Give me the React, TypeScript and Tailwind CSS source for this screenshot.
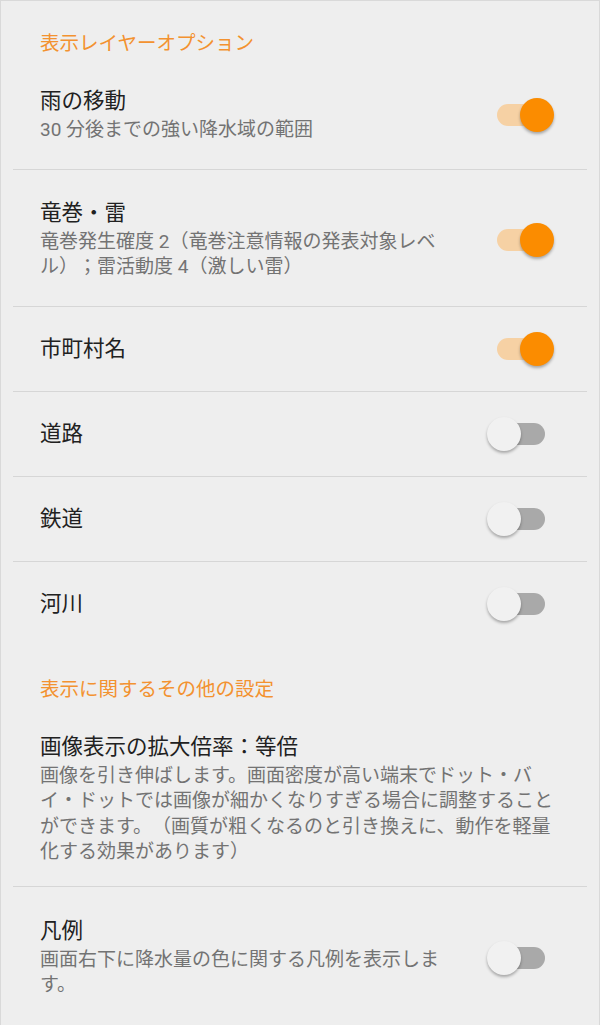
import { useState } from "react";

type Item = {
  title: string;
  summary?: string;
  on?: boolean;
};

const layers: Item[] = [
  { title: "雨の移動", summary: "30 分後までの強い降水域の範囲", on: true },
  {
    title: "竜巻・雷",
    summary: "竜巻発生確度 2（竜巻注意情報の発表対象レベル）；雷活動度 4（激しい雷）",
    on: true,
  },
  { title: "市町村名", on: true },
  { title: "道路", on: false },
  { title: "鉄道", on: false },
  { title: "河川", on: false },
];

function Switch({ checked, onChange }: { checked: boolean; onChange: () => void }) {
  return (
    <button
      onClick={onChange}
      role="switch"
      aria-checked={checked}
      className="relative w-[67px] h-[34px] shrink-0"
    >
      <span
        className={
          "absolute left-[10px] top-[6px] w-[48px] h-[22px] rounded-full " +
          (checked ? "bg-[#f6d1a4]" : "bg-[#a9a9a9]")
        }
      />
      <span
        className={
          "absolute top-0 w-[34px] h-[34px] rounded-full shadow-[0_2px_3px_rgba(0,0,0,0.3)] " +
          (checked ? "left-[33px] bg-[#fb8c00]" : "left-0 bg-[#f1f1f1]")
        }
      />
    </button>
  );
}

function Header({ children }: { children: string }) {
  return (
    <div className="pt-[29px] pl-[27px] text-[19.5px] leading-[28px] text-[#f39230]">{children}</div>
  );
}

export default function App() {
  const [state, setState] = useState<boolean[]>(layers.map((l) => !!l.on));
  const [legend, setLegend] = useState(false);

  function flip(i: number) {
    setState((s) => s.map((v, j) => (j === i ? !v : v)));
  }

  return (
    <div
      className="w-[600px] h-[1025px] overflow-hidden bg-[#eeeeee] border-x border-t border-[#d9d9d9] px-[12px] [text-spacing-trim:space-all]"
      style={{ fontFamily: 'Roboto, "Noto Sans CJK JP", sans-serif' }}
    >
      <Header>表示レイヤーオプション</Header>

      {layers.map((item, i) =>
        item.summary ? (
          <div
            key={item.title}
            className="flex items-center justify-between pl-[27px] pr-[33px] pt-[30px] pb-[26px] border-b border-[#d6d6d6]"
          >
            <div className="w-[405px]">
              <div className="text-[21.5px] leading-[26px] text-[#212121]">{item.title}</div>
              <div className="mt-[3px] text-[19px] leading-[25.5px] text-[#737373]">{item.summary}</div>
            </div>
            <Switch checked={state[i]} onChange={() => flip(i)} />
          </div>
        ) : (
          <div
            key={item.title}
            className={
              "flex items-center justify-between pl-[27px] pr-[33px] h-[85px] " +
              (i === layers.length - 1 ? "" : "border-b border-[#d6d6d6]")
            }
          >
            <div className="text-[21.5px] leading-[26px] text-[#212121]">{item.title}</div>
            <Switch checked={state[i]} onChange={() => flip(i)} />
          </div>
        )
      )}

      <Header>表示に関するその他の設定</Header>

      <div className="pl-[27px] pt-[30px] pb-[21px] border-b border-[#d6d6d6]">
        <div className="text-[21.5px] leading-[26px] text-[#212121]">画像表示の拡大倍率：等倍</div>
        <div className="w-[520px] mt-[3px] text-[19px] leading-[25.5px] text-[#737373]">
          画像を引き伸ばします。画面密度が高い端末でドット・バイ・ドットでは画像が細かくなりすぎる場合に調整することができます。（画質が粗くなるのと引き換えに、動作を軽量化する効果があります）
        </div>
      </div>

      <div className="flex items-center justify-between pl-[27px] pr-[33px] pt-[31px] pb-[26px]">
        <div className="w-[405px]">
          <div className="text-[21.5px] leading-[26px] text-[#212121]">凡例</div>
          <div className="mt-[3px] text-[19px] leading-[25.5px] text-[#737373]">
            画面右下に降水量の色に関する凡例を表示します。
          </div>
        </div>
        <Switch checked={legend} onChange={() => setLegend(!legend)} />
      </div>
    </div>
  );
}
